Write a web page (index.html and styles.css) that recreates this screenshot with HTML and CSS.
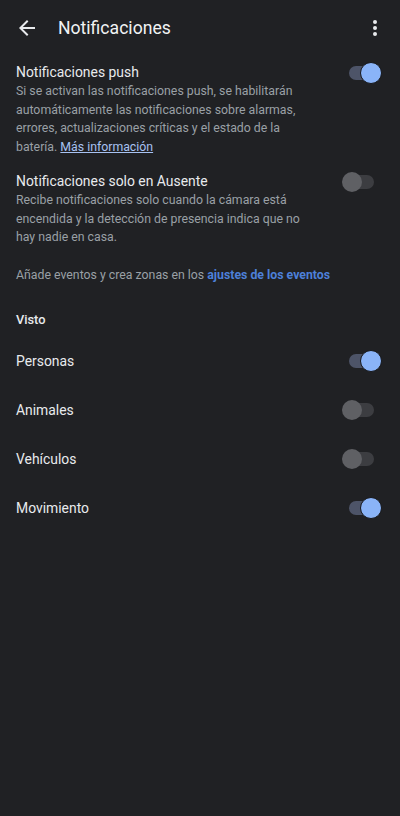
FILE: index.html
```html
<!DOCTYPE html>
<html lang="es">
<head>
<meta charset="utf-8">
<link rel="stylesheet" href="styles.css">
</head>
<body>
<header class="appbar">
  <svg class="back" width="24" height="24" viewBox="0 0 24 24"><path d="M20 11H7.83l5.59-5.59L12 4l-8 8 8 8 1.41-1.41L7.83 13H20v-2z" fill="#e8eaed"/></svg>
  <h1 class="title">Notificaciones</h1>
  <svg class="more" width="24" height="24" viewBox="0 0 24 24"><circle cx="12" cy="6" r="2" fill="#e8eaed"/><circle cx="12" cy="12" r="2" fill="#e8eaed"/><circle cx="12" cy="18" r="2" fill="#e8eaed"/></svg>
</header>
<main class="content">
  <section class="setting first">
    <div class="text">
      <div class="label">Notificaciones push</div>
      <p class="desc">Si se activan las notificaciones push, se habilitarán automáticamente las notificaciones sobre alarmas, errores, actualizaciones críticas y el estado de la batería. <a class="more-link" href="#">Más información</a></p>
    </div>
    <span class="toggle on"><span class="track"></span><span class="thumb"></span></span>
  </section>
  <section class="setting second">
    <div class="text">
      <div class="label">Notificaciones solo en Ausente</div>
      <p class="desc">Recibe notificaciones solo cuando la cámara está encendida y la detección de presencia indica que no hay nadie en casa.</p>
    </div>
    <span class="toggle"><span class="track"></span><span class="thumb"></span></span>
  </section>
  <p class="hint">Añade eventos y crea zonas en los <a class="events-link" href="#">ajustes de los eventos</a></p>
  <h2 class="section">Visto</h2>
  <div class="row"><span class="row-label">Personas</span><span class="toggle on"><span class="track"></span><span class="thumb"></span></span></div>
  <div class="row"><span class="row-label">Animales</span><span class="toggle"><span class="track"></span><span class="thumb"></span></span></div>
  <div class="row"><span class="row-label">Vehículos</span><span class="toggle"><span class="track"></span><span class="thumb"></span></span></div>
  <div class="row"><span class="row-label">Movimiento</span><span class="toggle on"><span class="track"></span><span class="thumb"></span></span></div>
</main>
</body>
</html>
```
FILE: styles.css
```css
html, body {
  margin: 0;
  padding: 0;
  background: #202124;
  height: 100%;
}
body {
  font-family: Roboto, "Noto Sans", "Liberation Sans", sans-serif;
  color: #e8eaed;
}
.appbar {
  height: 55px;
  display: flex;
  align-items: center;
  padding: 0 13px 0 15px;
}
.back { flex: none; }
.title {
  flex: 1;
  margin: 0 0 0 19px;
  font-size: 17.6px;
  font-weight: 400;
  color: #f1f3f4;
}
.more { flex: none; }
.content {
  padding: 0 19px 0 16px;
}
.setting {
  display: flex;
  align-items: flex-start;
  justify-content: space-between;
}
.setting.first { padding-top: 7px; }
.setting.second { padding-top: 15px; }
.text { width: 300px; }
.label {
  font-size: 13.9px;
  line-height: 20px;
  color: #e8eaed;
}
.desc {
  margin: 0;
  font-size: 12.3px;
  line-height: 18.5px;
  color: #9aa0a6;
}
.more-link {
  color: #a8c2f2;
  text-decoration: underline;
  text-underline-offset: 1px;
}
.hint {
  margin: 19px 0 0;
  font-size: 12.3px;
  line-height: 18.5px;
  color: #9aa0a6;
}
.events-link {
  color: #4d80d9;
  font-weight: 700;
  text-decoration: none;
}
.section {
  margin: 26px 0 0;
  font-size: 12.8px;
  line-height: 20px;
  font-weight: 500;
  color: #e8eaed;
}
.row {
  height: 49px;
  display: flex;
  align-items: center;
  justify-content: space-between;
}
.section + .row { margin-top: 6px; }
.row-label {
  font-size: 13.9px;
  color: #e8eaed;
}
.toggle {
  position: relative;
  flex: none;
  width: 40px;
  height: 22px;
}
.track {
  position: absolute;
  left: 8px;
  right: 7px;
  top: 4px;
  height: 14px;
  border-radius: 7px;
  background: #3c3d41;
}
.thumb {
  position: absolute;
  top: 1px;
  left: 1px;
  width: 20px;
  height: 20px;
  border-radius: 50%;
  background: #5f6064;
}
.toggle.on .track { background: #4d5468; }
.toggle.on .thumb {
  left: auto;
  right: -1px;
  top: 0;
  background: #8ab4f8;
  border: 1px solid #16171a;
}
```
